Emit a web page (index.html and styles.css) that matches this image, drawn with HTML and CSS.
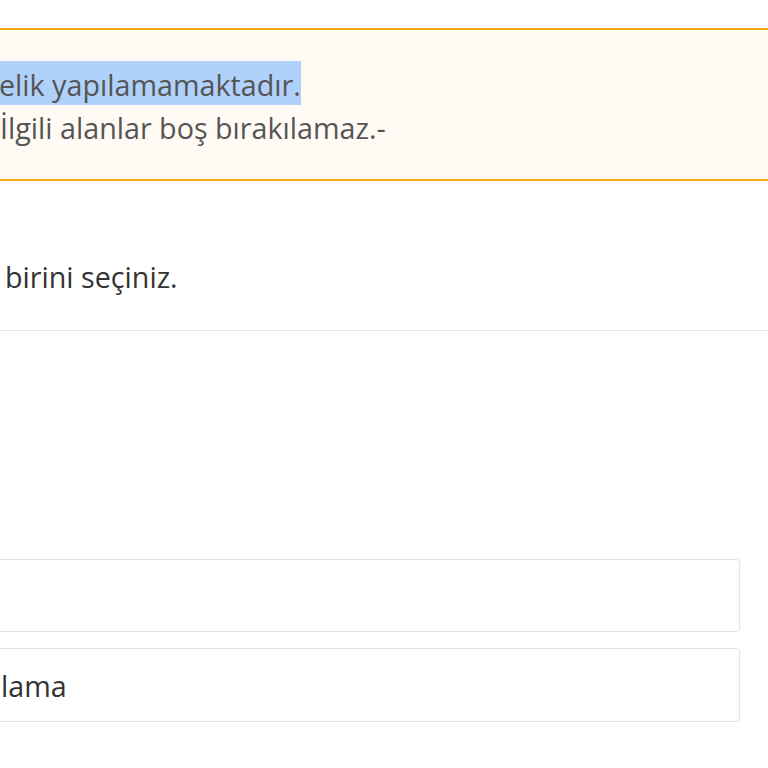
FILE: index.html
```html
<!DOCTYPE html>
<html lang="tr">
<head>
<meta charset="utf-8">
<title>Üyelik</title>
<link rel="stylesheet" href="styles.css">
</head>
<body>
<div class="page">
  <div class="alert">
    <p class="alert-line first"><span class="selected">elik yapılamamaktadır.</span></p>
    <p class="alert-line second">İlgili alanlar boş bırakılamaz.-</p>
  </div>
  <div class="choose">
    <p class="choose-text">birini seçiniz.</p>
  </div>
  <div class="form">
    <div class="field"></div>
    <div class="field"><span class="field-text">lama</span></div>
  </div>
</div>
</body>
</html>
```
FILE: styles.css
```css
html, body {
  margin: 0;
  padding: 0;
  background: #ffffff;
  overflow: hidden;
}
body {
  font-family: "Open Sans", "Noto Sans", sans-serif;
  font-size: 28.7px;
  line-height: 43px;
  color: #333333;
}
.page {
  padding-top: 28px;
}
.alert {
  background: #fffaf3;
  border-top: 2px solid #efab12;
  border-bottom: 2px solid #efab12;
  padding: 33px 0 30px 0;
  color: #555555;
}
.alert-line {
  margin: 0;
  white-space: nowrap;
}
.alert-line.first {
  margin-left: -1px;
}
.selected {
  background: #b0d1fa;
  padding: 4px 0 1px 0;
}
.choose {
  margin-top: 74px;
  padding: 0 0 32px 5px;
  border-bottom: 1px solid #e6e6e6;
}
.choose-text {
  margin: 0;
  color: #333333;
}
.form {
  margin: 228px 28px 0 -20px;
  display: flex;
  flex-direction: column;
  gap: 16px;
}
.field {
  box-sizing: border-box;
  height: 73px;
  border: 1px solid #e3e3e3;
  border-radius: 4px;
  box-shadow: 0 0 2px rgba(0, 0, 0, 0.06);
  background: #ffffff;
  padding: 15px 0 0 20px;
}
.field + .field {
  height: 74px;
}
.field-text {
  color: #333333;
}
```
